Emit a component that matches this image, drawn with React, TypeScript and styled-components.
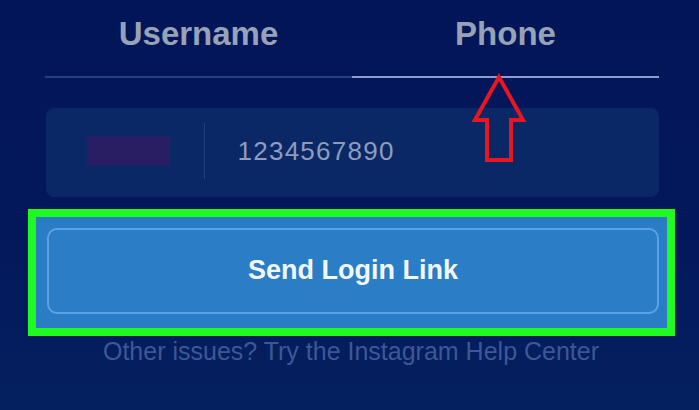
import React from 'react'
import styled, { createGlobalStyle } from 'styled-components'

const GlobalStyle = createGlobalStyle`
  html, body {
    margin: 0;
    padding: 0;
    background: #03175a;
  }
  body {
    font-family: 'Liberation Sans', Arial, sans-serif;
  }
`

type TabProps = { active?: boolean }

const Page = styled.div`
  width: 699px;
  height: 410px;
  box-sizing: border-box;
  display: flex;
  flex-direction: column;
  align-items: center;
  padding-top: 15px;
  background: linear-gradient(180deg, #021558 0%, #03185b 55%, #05205f 100%);
  overflow: hidden;
`

const Tabs = styled.div`
  position: relative;
  width: 614px;
  display: grid;
  grid-template-columns: 1fr 1fr;
  margin-left: 5px;
`

const Tab = styled.div<TabProps>`
  height: 38px;
  line-height: 38px;
  padding-bottom: 23px;
  text-align: center;
  font-size: 33px;
  font-weight: bold;
  color: #98a2b6;
  border-bottom: 2px solid ${(p) => (p.active ? '#8e9dcb' : '#22407f')};
`

const Arrow = styled.svg`
  position: absolute;
  left: 427px;
  top: 59px;
  width: 54px;
  height: 89px;
  overflow: visible;
`

const PhoneBox = styled.div`
  margin-top: 30px;
  margin-left: 5px;
  width: 613px;
  height: 89px;
  box-sizing: border-box;
  padding: 0 0 3px 41px;
  border-radius: 8px;
  background: #0a2865;
  display: flex;
  align-items: center;
`

const CountryCode = styled.div`
  width: 83px;
  height: 30px;
  background: #291e64;
`

const Divider = styled.div`
  width: 1px;
  height: 56px;
  margin: 0 33px 0 34px;
  background: #24407a;
`

const PhoneNumber = styled.span`
  font-size: 26px;
  letter-spacing: 1.25px;
  color: #8d9cbf;
`

const Highlight = styled.div`
  margin-top: 12px;
  width: 647px;
  box-sizing: border-box;
  border: 8px solid #1ffb22;
  background: #2a7cc5;
  padding: 11px 8px 14px 11px;
  margin-left: 4px;
`

const SendButton = styled.button`
  display: block;
  width: 100%;
  height: 86px;
  box-sizing: border-box;
  border: 2px solid #5ba2e3;
  border-radius: 10px;
  background: #2b7ec5;
  color: #f2f7ff;
  font-family: 'Liberation Sans', Arial, sans-serif;
  font-size: 27px;
  font-weight: bold;
  padding: 0 0 2px;
  cursor: pointer;
`

const HelpText = styled.div`
  margin-top: 1px;
  line-height: 28px;
  font-size: 25px;
  color: #3c5896;
  margin-left: 3px;
`

export default function App() {
  return (
    <Page>
      <GlobalStyle />
      <Tabs>
        <Tab>Username</Tab>
        <Tab active>Phone</Tab>
        <Arrow viewBox="0 0 54 89">
          <polygon
            points="27,3 3,46 15,46 15,86 39,86 39,46 51,46"
            fill="none"
            stroke="#e8161e"
            strokeWidth="4"
            strokeLinejoin="miter"
          />
        </Arrow>
      </Tabs>

      <PhoneBox>
        <CountryCode />
        <Divider />
        <PhoneNumber>1234567890</PhoneNumber>
      </PhoneBox>

      <Highlight>
        <SendButton>Send Login Link</SendButton>
      </Highlight>

      <HelpText>Other issues? Try the Instagram Help Center</HelpText>
    </Page>
  )
}
